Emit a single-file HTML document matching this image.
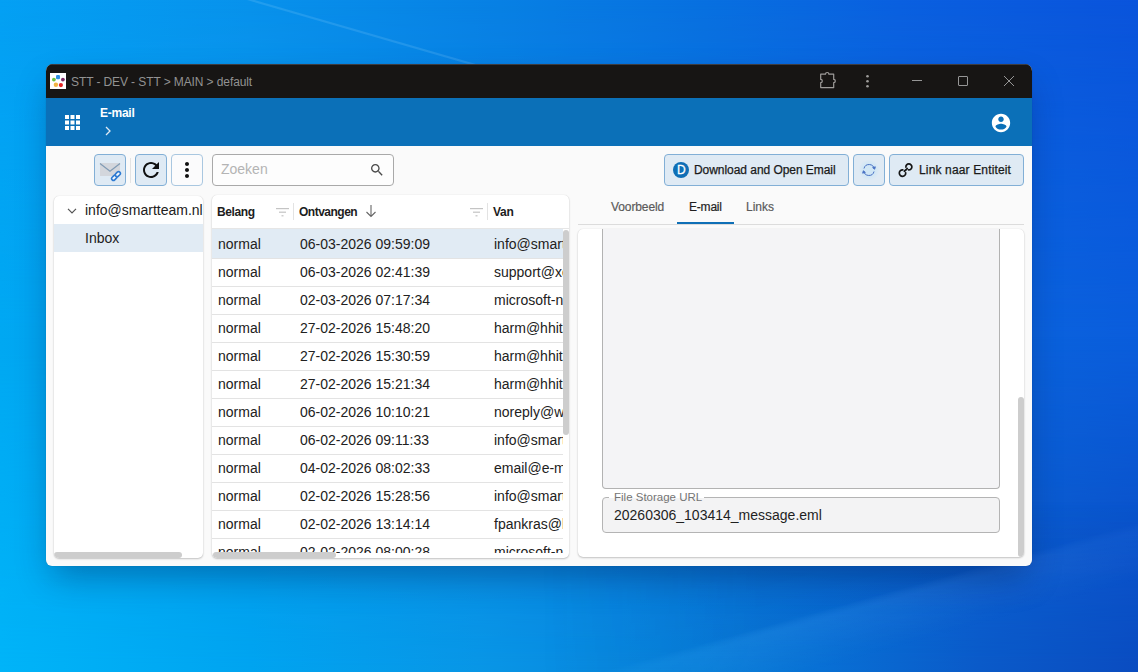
<!DOCTYPE html>
<html><head><meta charset="utf-8">
<style>
*{box-sizing:border-box;margin:0;padding:0}
html,body{width:1138px;height:672px;overflow:hidden}
body{font-family:"Liberation Sans",sans-serif;position:relative;background:#0870dc}
.a{position:absolute}
#bg1{position:absolute;left:0;top:0;width:1138px;height:672px;
 background:linear-gradient(90deg,#04a0f4 0%,#0892ec 22%,#0880e4 44%,#0870e0 62%,#0a60e0 79%,#0a54dc 100%)}
#bg2{position:absolute;left:0;top:0;width:1138px;height:672px;
 background:linear-gradient(90deg,#00a8f2 0%,#0890e8 30%,#0a6ee0 70%,#0a5ddc 100%);
 -webkit-mask-image:linear-gradient(180deg,rgba(0,0,0,0) 0px,rgba(0,0,0,1) 336px)}
#bg3{position:absolute;left:0;top:0;width:1138px;height:672px;
 background:linear-gradient(90deg,#00b4f8 0%,#00a4f0 22%,#0896e6 42%,#0884dc 58%,#0870d4 72%,#0a5ac8 86%,#0a4cc0 100%);
 -webkit-mask-image:linear-gradient(180deg,rgba(0,0,0,0) 336px,rgba(0,0,0,1) 672px)}
#win{position:absolute;left:46px;top:64px;width:986px;height:502px;border-radius:7px 7px 6px 6px;overflow:hidden;background:#fafafa;box-shadow:0 0 1px rgba(0,0,0,.25),0 16px 34px -6px rgba(0,20,70,.36)}
#title{position:absolute;left:0;top:0;width:986px;height:34px;background:#171514;border-top:1px solid #3c3b40}
#hdr{position:absolute;left:0;top:34px;width:986px;height:48px;background:#0b70b8}
.t{position:absolute;white-space:nowrap}
.card{position:absolute;background:#fff;border-radius:5px;box-shadow:0 1px 2px rgba(0,0,0,.22),0 0 1px rgba(0,0,0,.14);overflow:hidden}
.btn{position:absolute;height:32px;border:1px solid #82afd6;border-radius:4px;background:#dfeaf4}
.row{position:absolute;left:0;width:357px;border-bottom:1px solid #e3e3e3;font-size:14px;color:#212121;background:#fff}
.row.sel{background:#e1ebf4}
.row span{position:absolute;white-space:nowrap}
</style></head><body>
<div id="bg1"></div><div id="bg2"></div><div id="bg3"></div>
<svg class="a" style="left:0;top:0" width="1138" height="672" viewBox="0 0 1138 672">
  <defs>
    <filter id="bl1"><feGaussianBlur stdDeviation="0.7"/></filter>
    <linearGradient id="gb" gradientUnits="userSpaceOnUse" x1="607" y1="574" x2="647" y2="718">
      <stop offset="0" stop-color="#002a80" stop-opacity="0.10"/>
      <stop offset="0.62" stop-color="#002a80" stop-opacity="0.08"/>
      <stop offset="0.68" stop-color="#ffffff" stop-opacity="0.045"/>
      <stop offset="1" stop-color="#ffffff" stop-opacity="0"/>
    </linearGradient>
    <linearGradient id="gm" gradientUnits="userSpaceOnUse" x1="540" y1="0" x2="760" y2="0">
      <stop offset="0" stop-color="#fff" stop-opacity="0"/>
      <stop offset="1" stop-color="#fff" stop-opacity="1"/>
    </linearGradient>
    <mask id="mk"><rect x="0" y="0" width="1138" height="672" fill="url(#gm)"/></mask>
    <linearGradient id="gv" gradientUnits="userSpaceOnUse" x1="0" y1="500" x2="0" y2="570">
      <stop offset="0" stop-color="#fff" stop-opacity="0"/>
      <stop offset="1" stop-color="#fff" stop-opacity="1"/>
    </linearGradient>
    <mask id="mk2"><rect x="0" y="0" width="1138" height="672" fill="url(#gv)"/></mask>
  </defs>
  <path d="M244 -2 L520 78" stroke="#d0eeff" stroke-opacity="0.13" stroke-width="2.2" filter="url(#bl1)"/>
  <g mask="url(#mk2)"><rect x="400" y="480" width="738" height="192" fill="url(#gb)" mask="url(#mk)"/></g>
</svg>
<div id="win">
  <div id="title"></div>
  <div id="hdr"></div>
</div>

<!-- title bar content -->
<svg class="a" style="left:50px;top:73px" width="16" height="16" viewBox="0 0 16 16">
  <rect width="16" height="16" fill="#fff"/>
  <rect x="6" y="2" width="4" height="4.3" rx="1.2" fill="#2e8fe0"/>
  <circle cx="3.9" cy="6.6" r="1.9" fill="#6cc040"/>
  <circle cx="12.9" cy="6.6" r="1.9" fill="#7a2a66"/>
  <circle cx="5.9" cy="11.7" r="2.2" fill="#f2b442"/>
  <circle cx="10.9" cy="12.1" r="2.1" fill="#e42424"/>
</svg>
<div class="t" style="left:71px;top:75px;font-size:12px;color:#929292;letter-spacing:-0.1px">STT - DEV - STT &gt; MAIN &gt; default</div>
<!-- extension icon -->
<svg class="a" style="left:818px;top:70px" width="20" height="20" viewBox="0 0 20 20" fill="none" stroke="#9e9c9a" stroke-width="1.2" stroke-linejoin="round">
  <path d="M2.7 4.2 H7.5 A1.7 1.7 0 0 1 10.9 4.2 H15.7 V9.4 A1.6 1.6 0 0 1 15.7 12.6 V17.6 H2.7 V12.6 A1.6 1.6 0 0 0 2.7 9.4 Z"/>
</svg>
<svg class="a" style="left:864px;top:74px" width="8" height="16" viewBox="0 0 8 16" fill="#9e9c9a">
  <circle cx="3.5" cy="2.3" r="1.3"/><circle cx="3.5" cy="7.3" r="1.3"/><circle cx="3.5" cy="12.3" r="1.3"/>
</svg>
<div class="a" style="left:912px;top:80px;width:10px;height:1px;background:#969696"></div>
<div class="a" style="left:958px;top:76px;width:10px;height:10px;border:1px solid #969696;border-radius:1px"></div>
<svg class="a" style="left:1003px;top:75px" width="12" height="12" viewBox="0 0 12 12" stroke="#969696" stroke-width="1">
  <path d="M1 1 L11 11 M11 1 L1 11"/>
</svg>

<!-- header content -->
<svg class="a" style="left:65px;top:115px" width="16" height="16" viewBox="0 0 16 16" fill="#fff">
  <rect x="0" y="0" width="4" height="4"/><rect x="5.5" y="0" width="4" height="4"/><rect x="11" y="0" width="4" height="4"/>
  <rect x="0" y="5.5" width="4" height="4"/><rect x="5.5" y="5.5" width="4" height="4"/><rect x="11" y="5.5" width="4" height="4"/>
  <rect x="0" y="11" width="4" height="4"/><rect x="5.5" y="11" width="4" height="4"/><rect x="11" y="11" width="4" height="4"/>
</svg>
<div class="t" style="left:100px;top:106px;font-size:12px;font-weight:bold;color:#fff;letter-spacing:-0.25px">E-mail</div>
<svg class="a" style="left:104px;top:126px" width="8" height="10" viewBox="0 0 8 10" fill="none" stroke="#dfe9f3" stroke-width="1.3">
  <path d="M2 1 L6 5 L2 9"/>
</svg>
<svg class="a" style="left:990px;top:112px" width="22" height="22" viewBox="0 0 24 24" fill="#fff">
  <path d="M12 2C6.48 2 2 6.48 2 12s4.48 10 10 10 10-4.48 10-10S17.52 2 12 2zm0 3c1.66 0 3 1.34 3 3s-1.34 3-3 3-3-1.34-3-3 1.34-3 3-3zm0 14.2c-2.5 0-4.71-1.28-6-3.22.03-1.99 4-3.08 6-3.08 1.99 0 5.97 1.09 6 3.08-1.29 1.94-3.5 3.22-6 3.22z"/>
</svg>

<!-- toolbar -->
<div class="btn" style="left:94px;top:154px;width:32px"></div>
<svg class="a" style="left:98px;top:158px" width="24" height="24" viewBox="0 0 24 24">
  <path d="M2 5 H22 V18 H2 Z" fill="#d3d6dc"/>
  <path d="M2 5.5 L12 13.2 L22 5.5" fill="none" stroke="#7f9ab4" stroke-width="1.2"/>
  <g transform="rotate(-45 18 18)" fill="#f4f8fc" stroke="#2d7ad2" stroke-width="1.6">
    <rect x="12.6" y="16.2" width="5.6" height="3.6" rx="1.8"/>
    <rect x="17.8" y="16.2" width="5.6" height="3.6" rx="1.8"/>
  </g>
</svg>
<div class="a" style="left:130px;top:158px;width:1px;height:25px;background:#e4e4e4"></div>
<div class="btn" style="left:135px;top:154px;width:32px"></div>
<svg class="a" style="left:139px;top:158px" width="24" height="24" viewBox="0 0 24 24" fill="#111">
  <path d="M17.65 6.35C16.2 4.9 14.21 4 12 4c-4.42 0-7.99 3.58-7.99 8s3.57 8 7.99 8c3.73 0 6.84-2.55 7.730-6h-2.08c-.82 2.33-3.04 4-5.65 4-3.310 0-6-2.69-6-6s2.69-6 6-6c1.66 0 3.14.69 4.22 1.78L13 11h7V4l-2.35 2.35z"/>
</svg>
<div class="btn" style="left:171px;top:154px;width:32px;background:#fbfbfc;border-color:#a9c7e0"></div>
<svg class="a" style="left:175px;top:158px" width="24" height="24" viewBox="0 0 24 24" fill="#111">
  <path d="M12 8c1.1 0 2-.9 2-2s-.9-2-2-2-2 .9-2 2 .9 2 2 2zm0 2c-1.1 0-2 .9-2 2s.9 2 2 2 2-.9 2-2-.9-2-2-2zm0 6c-1.1 0-2 .9-2 2s.9 2 2 2 2-.9 2-2-.9-2-2-2z"/>
</svg>
<div class="a" style="left:212px;top:154px;width:182px;height:32px;border:1px solid #a9a9a9;border-radius:4px;background:#fdfdfd"></div>
<div class="t" style="left:221px;top:161px;font-size:14px;color:#b4b4b4">Zoeken</div>
<svg class="a" style="left:369px;top:162px" width="16" height="16" viewBox="0 0 24 24" fill="#4a4a4a">
  <path d="M15.5 14h-.79l-.28-.27C15.41 12.59 16 11.11 16 9.500 16 5.91 13.09 3 9.500 3S3 5.910 3 9.500 5.91 16 9.500 16c1.61 0 3.09-.59 4.23-1.57l.27.28v.79l5 4.99L20.49 19l-4.99-5zm-6 0C7.01 14 5 11.99 5 9.500S7.01 5 9.500 5 14 7.01 14 9.500 11.99 14 9.500 14z"/>
</svg>

<div class="btn" style="left:664px;top:154px;width:185px"></div>
<div class="a" style="left:673px;top:162px;width:16px;height:16px;border-radius:50%;background:#0f6fb6"></div>
<div class="t" style="left:677px;top:163px;font-size:12px;color:#fff;-webkit-text-stroke:0.3px #fff">D</div>
<div class="t" style="left:694px;top:163px;font-size:12px;color:#1a1a1a;-webkit-text-stroke:0.25px #1a1a1a;letter-spacing:-0.05px">Download and Open Email</div>
<div class="btn" style="left:853px;top:154px;width:32px"></div>
<div class="a" style="left:859px;top:159px;width:20px;height:22px;border-radius:50%;background:radial-gradient(circle,#d0e6f5 40%,rgba(208,230,245,0) 72%)"></div>
<svg class="a" style="left:861px;top:162px" width="16" height="16" viewBox="0 0 16 16" fill="none" stroke="#4a72c4" stroke-width="1">
  <path d="M3 6.5 A5.2 5.2 0 0 1 13.2 7"/>
  <path d="M13 9.5 A5.2 5.2 0 0 1 2.8 9"/>
  <path d="M11.6 5.6 L13.7 7.3 L14.4 4.8 Z" fill="#4a72c4" stroke-width="0.8"/>
  <path d="M4.4 10.4 L2.3 8.7 L1.6 11.2 Z" fill="#4a72c4" stroke-width="0.8"/>
</svg>
<div class="btn" style="left:889px;top:154px;width:135px"></div>
<svg class="a" style="left:894px;top:159px" width="24" height="22" viewBox="0 0 24 22" fill="none" stroke="#161616" stroke-width="1.7" stroke-linecap="round">
  <path d="M11.9 8.2 A3 3 0 1 1 14.6 10.9"/>
  <path d="M11.7 13.8 A3.2 3.2 0 1 1 8.8 10.9"/>
  <path d="M10.4 12.2 L13.2 9.6" stroke-width="1.9"/>
</svg>
<div class="t" style="left:919px;top:163px;font-size:12px;color:#1a1a1a;-webkit-text-stroke:0.25px #1a1a1a;letter-spacing:0.15px">Link naar Entiteit</div>

<!-- tree card -->
<div class="card" style="left:54px;top:196px;width:149px;height:362px">
  <svg class="a" style="left:13px;top:12px" width="10" height="6" viewBox="0 0 10 6" fill="none" stroke="#555" stroke-width="1.2"><path d="M1 0.8 L5 4.8 L9 0.8"/></svg>
  <div class="t" style="left:31px;top:6px;font-size:14px;color:#212121">info@smartteam.nl</div>
  <div class="a" style="left:0;top:28px;width:149px;height:28px;background:#e1ebf4"></div>
  <div class="t" style="left:31px;top:34px;font-size:14px;color:#212121">Inbox</div>
  <div class="a" style="left:0;top:356px;width:128px;height:6px;border-radius:3px;background:#cdcdcd"></div>
</div>

<!-- grid card -->
<div class="card" style="left:212px;top:195px;width:357px;height:363px">
  <div class="t" style="left:5px;top:10px;font-size:12px;font-weight:bold;color:#1d1d1d;letter-spacing:-0.4px">Belang</div>
  <svg class="a" style="left:64px;top:13px" width="14" height="10" viewBox="0 0 14 10" fill="#c4c4c4"><rect x="0" y="0" width="13" height="1.2"/><rect x="3" y="3.6" width="7" height="1.2"/><rect x="5.5" y="7.2" width="2" height="1.2"/></svg>
  <div class="a" style="left:81px;top:8px;width:1px;height:17px;background:#e3e3e3"></div>
  <div class="t" style="left:87px;top:10px;font-size:12px;font-weight:bold;color:#1d1d1d;letter-spacing:-0.5px">Ontvangen</div>
  <svg class="a" style="left:153px;top:9px" width="12" height="14" viewBox="0 0 12 14" fill="none" stroke="#666" stroke-width="1.1"><path d="M6 1 V12.5 M1.5 8 L6 12.5 L10.5 8"/></svg>
  <svg class="a" style="left:258px;top:13px" width="14" height="10" viewBox="0 0 14 10" fill="#c4c4c4"><rect x="0" y="0" width="13" height="1.2"/><rect x="3" y="3.6" width="7" height="1.2"/><rect x="5.5" y="7.2" width="2" height="1.2"/></svg>
  <div class="a" style="left:275px;top:8px;width:1px;height:17px;background:#e3e3e3"></div>
  <div class="t" style="left:281px;top:10px;font-size:12px;font-weight:bold;color:#1d1d1d;letter-spacing:-0.3px">Van</div>
  <div class="a" style="left:0;top:33px;width:357px;height:1px;background:#e6e6e6"></div>
  <div class="a" style="left:0;top:34px;width:351px;height:324px;overflow:hidden">
  <div class="a" style="left:0;top:-34px;width:357px;height:400px">
<div class="row sel" style="top:34px;height:30px"><span style="left:6px;top:7px">normal</span><span style="left:88px;top:7px">06-03-2026 09:59:09</span><span style="left:282px;top:7px">info@smartteam.nl</span></div>
<div class="row" style="top:64px;height:28px"><span style="left:6px;top:5px">normal</span><span style="left:88px;top:5px">06-03-2026 02:41:39</span><span style="left:282px;top:5px">support@xendit.co</span></div>
<div class="row" style="top:92px;height:28px"><span style="left:6px;top:5px">normal</span><span style="left:88px;top:5px">02-03-2026 07:17:34</span><span style="left:282px;top:5px">microsoft-noreply@microsoft.com</span></div>
<div class="row" style="top:120px;height:28px"><span style="left:6px;top:5px">normal</span><span style="left:88px;top:5px">27-02-2026 15:48:20</span><span style="left:282px;top:5px">harm@hhitsolutions.nl</span></div>
<div class="row" style="top:148px;height:28px"><span style="left:6px;top:5px">normal</span><span style="left:88px;top:5px">27-02-2026 15:30:59</span><span style="left:282px;top:5px">harm@hhitsolutions.nl</span></div>
<div class="row" style="top:176px;height:28px"><span style="left:6px;top:5px">normal</span><span style="left:88px;top:5px">27-02-2026 15:21:34</span><span style="left:282px;top:5px">harm@hhitsolutions.nl</span></div>
<div class="row" style="top:204px;height:28px"><span style="left:6px;top:5px">normal</span><span style="left:88px;top:5px">06-02-2026 10:10:21</span><span style="left:282px;top:5px">noreply@wetransfer.com</span></div>
<div class="row" style="top:232px;height:28px"><span style="left:6px;top:5px">normal</span><span style="left:88px;top:5px">06-02-2026 09:11:33</span><span style="left:282px;top:5px">info@smartteam.nl</span></div>
<div class="row" style="top:260px;height:28px"><span style="left:6px;top:5px">normal</span><span style="left:88px;top:5px">04-02-2026 08:02:33</span><span style="left:282px;top:5px">email@e-mail.nl</span></div>
<div class="row" style="top:288px;height:28px"><span style="left:6px;top:5px">normal</span><span style="left:88px;top:5px">02-02-2026 15:28:56</span><span style="left:282px;top:5px">info@smartteam.nl</span></div>
<div class="row" style="top:316px;height:28px"><span style="left:6px;top:5px">normal</span><span style="left:88px;top:5px">02-02-2026 13:14:14</span><span style="left:282px;top:5px">fpankras@live.nl</span></div>
<div class="row" style="top:344px;height:28px"><span style="left:6px;top:5px">normal</span><span style="left:88px;top:5px">02-02-2026 08:00:28</span><span style="left:282px;top:5px">microsoft-noreply@microsoft.com</span></div>
  </div>
  </div>
  <div class="a" style="left:351px;top:35px;width:6px;height:205px;border-radius:3px;background:#cdcdcd"></div>
  <div class="a" style="left:1px;top:357px;width:123px;height:6px;border-radius:3px;background:#cdcdcd"></div>
</div>

<!-- right pane -->
<div class="t" style="left:611px;top:200px;font-size:12px;color:#5a5a5a;letter-spacing:-0.1px;-webkit-text-stroke:0.2px #5a5a5a">Voorbeeld</div>
<div class="t" style="left:689px;top:200px;font-size:12px;color:#1f1f1f;letter-spacing:-0.2px;-webkit-text-stroke:0.2px #1f1f1f">E-mail</div>
<div class="t" style="left:746px;top:200px;font-size:12px;color:#5a5a5a;-webkit-text-stroke:0.2px #5a5a5a">Links</div>
<div class="a" style="left:578px;top:224px;width:446px;height:1px;background:#dcdcdc"></div>
<div class="a" style="left:677px;top:222px;width:57px;height:2px;background:#0f6fb6"></div>

<div class="card" style="left:578px;top:229px;width:446px;height:328px">
  <div class="a" style="left:24px;top:-10px;width:398px;height:270px;border:1px solid #b2b2b2;border-top:none;border-radius:0 0 4px 4px;background:#f4f4f6"></div>
  <div class="a" style="left:24px;top:268px;width:398px;height:36px;border:1px solid #b4b4b4;border-radius:4px;background:#f3f3f4"></div>
  <div class="a" style="left:31px;top:265px;width:95px;height:4px;background:#fff"></div>
  <div class="t" style="left:36px;top:262px;font-size:11.5px;color:#757575">File Storage URL</div>
  <div class="t" style="left:36px;top:278px;font-size:14px;color:#1f1f1f">20260306_103414_message.eml</div>
  <div class="a" style="left:440px;top:168px;width:6px;height:160px;border-radius:3px;background:#cdcdcd"></div>
</div>

</body></html>
